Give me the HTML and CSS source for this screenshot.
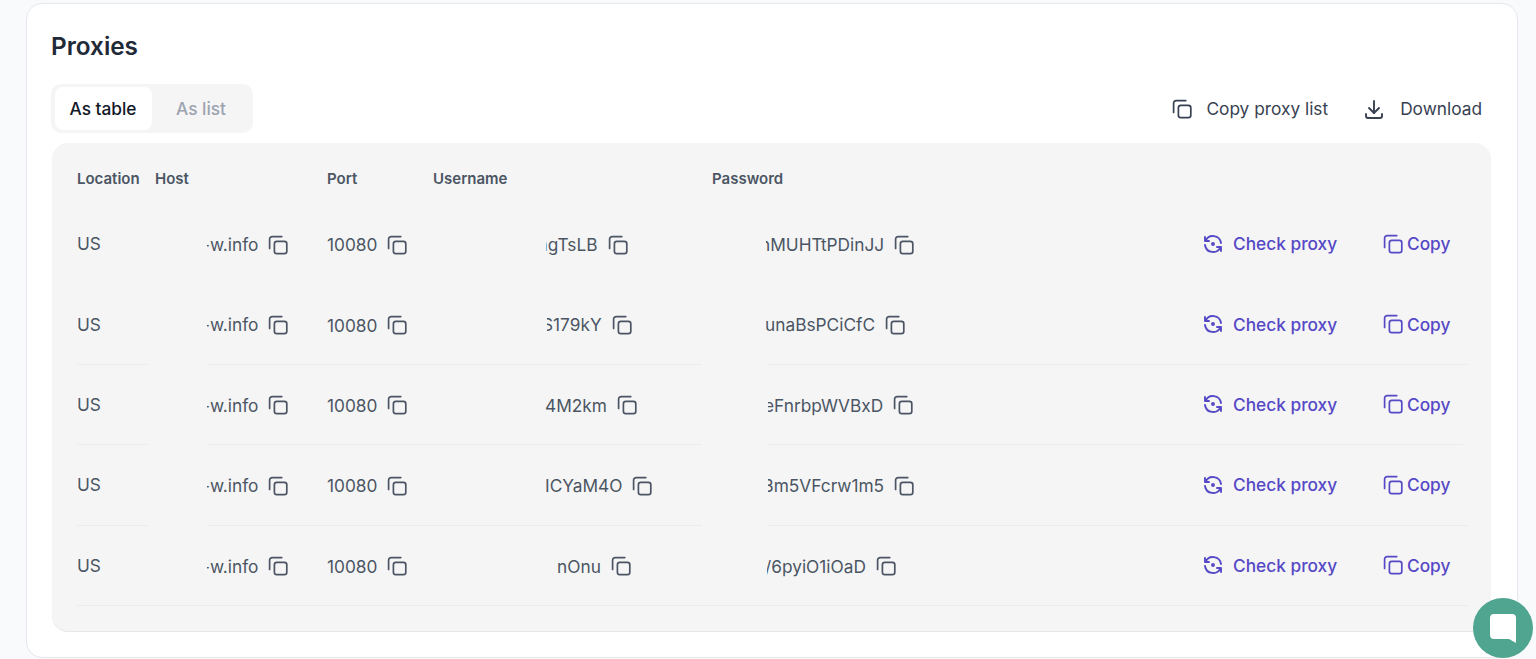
FILE: index.html
```html
<!DOCTYPE html>
<html lang="en">
<head>
  <meta charset="UTF-8" />
  <meta name="viewport" content="width=device-width, initial-scale=1.0" />
  <title>Proxies</title>
  <link rel="stylesheet" href="styles.css">
</head>
<body>
  <svg class="defs" width="0" height="0">
    <symbol id="i-copy" viewBox="0 0 20 20">
      <rect x="6.4" y="6.4" width="12.4" height="12.2" rx="2.4" />
      <path d="M1.6 13.4V4.2a2.6 2.6 0 0 1 2.6-2.6h9.6" />
    </symbol>
    <symbol id="i-check" viewBox="0 0 24 24">
      <path d="M20 11a8.1 8.1 0 0 0-15.5-2m-.5-4v4h4" />
      <path d="M4 13a8.1 8.1 0 0 0 15.5 2m.5 4v-4h-4" />
      <circle cx="12" cy="12" r="1" />
    </symbol>
    <symbol id="i-download" viewBox="0 0 24 24">
      <path d="M4 17v2a2 2 0 0 0 2 2h12a2 2 0 0 0 2-2v-2" />
      <path d="M7 11l5 5l5-5" />
      <path d="M12 4v12" />
    </symbol>
  </svg>

  <main class="card">
    <h1 class="title">Proxies</h1>

    <div class="toolbar">
      <div class="tabs">
        <button class="tab active">As table</button>
        <button class="tab">As list</button>
      </div>
      <div class="actions">
        <a class="action"><svg class="icon"><use href="#i-copy" /></svg>Copy proxy list</a>
        <a class="action action-dl"><svg class="icon icon-dl"><use href="#i-download" /></svg>Download</a>
      </div>
    </div>

    <div class="panel">
      <table class="proxies">
        <colgroup>
          <col class="c-loc"><col class="c-host"><col class="c-port"><col class="c-user"><col class="c-pass"><col class="c-check"><col class="c-copy">
        </colgroup>
        <thead>
          <tr><th>Location</th><th>Host</th><th>Port</th><th>Username</th><th>Password</th><th></th><th></th></tr>
        </thead>
        <tbody>
          <tr class="plain">
            <td>US</td>
            <td class="host"><span class="val masked cut-host">-w.info</span><svg class="icon"><use href="#i-copy" /></svg></td>
            <td><span class="val">10080</span><svg class="icon"><use href="#i-copy" /></svg></td>
            <td class="user"><span class="val masked cut-u1">agTsLB</span><svg class="icon"><use href="#i-copy" /></svg></td>
            <td class="pass"><span class="val masked cut-p1">nMUHTtPDinJJ</span><svg class="icon"><use href="#i-copy" /></svg></td>
            <td class="link"><a><svg class="icon icon-check"><use href="#i-check" /></svg>Check proxy</a></td>
            <td class="link"><a class="copy"><svg class="icon"><use href="#i-copy" /></svg>Copy</a></td>
          </tr>
          <tr class="broken">
            <td>US</td>
            <td class="host"><span class="val masked cut-host">-w.info</span><svg class="icon"><use href="#i-copy" /></svg></td>
            <td><span class="val">10080</span><svg class="icon"><use href="#i-copy" /></svg></td>
            <td class="user"><span class="val masked cut-u2">S179kY</span><svg class="icon"><use href="#i-copy" /></svg></td>
            <td class="pass"><span class="val masked cut-p2">unaBsPCiCfC</span><svg class="icon"><use href="#i-copy" /></svg></td>
            <td class="link"><a><svg class="icon icon-check"><use href="#i-check" /></svg>Check proxy</a></td>
            <td class="link"><a class="copy"><svg class="icon"><use href="#i-copy" /></svg>Copy</a></td>
          </tr>
          <tr class="broken short-line">
            <td>US</td>
            <td class="host"><span class="val masked cut-host">-w.info</span><svg class="icon"><use href="#i-copy" /></svg></td>
            <td><span class="val">10080</span><svg class="icon"><use href="#i-copy" /></svg></td>
            <td class="user"><span class="val">4M2km</span><svg class="icon"><use href="#i-copy" /></svg></td>
            <td class="pass"><span class="val masked cut-p3">eFnrbpWVBxD</span><svg class="icon"><use href="#i-copy" /></svg></td>
            <td class="link"><a><svg class="icon icon-check"><use href="#i-check" /></svg>Check proxy</a></td>
            <td class="link"><a class="copy"><svg class="icon"><use href="#i-copy" /></svg>Copy</a></td>
          </tr>
          <tr class="broken">
            <td>US</td>
            <td class="host"><span class="val masked cut-host">-w.info</span><svg class="icon"><use href="#i-copy" /></svg></td>
            <td><span class="val">10080</span><svg class="icon"><use href="#i-copy" /></svg></td>
            <td class="user"><span class="val">ICYaM4O</span><svg class="icon"><use href="#i-copy" /></svg></td>
            <td class="pass"><span class="val masked cut-p4">3m5VFcrw1m5</span><svg class="icon"><use href="#i-copy" /></svg></td>
            <td class="link"><a><svg class="icon icon-check"><use href="#i-check" /></svg>Check proxy</a></td>
            <td class="link"><a class="copy"><svg class="icon"><use href="#i-copy" /></svg>Copy</a></td>
          </tr>
          <tr>
            <td>US</td>
            <td class="host"><span class="val masked cut-host">-w.info</span><svg class="icon"><use href="#i-copy" /></svg></td>
            <td><span class="val">10080</span><svg class="icon"><use href="#i-copy" /></svg></td>
            <td class="user short"><span class="val">nOnu</span><svg class="icon"><use href="#i-copy" /></svg></td>
            <td class="pass"><span class="val masked cut-p5">/6pyiO1iOaD</span><svg class="icon"><use href="#i-copy" /></svg></td>
            <td class="link"><a><svg class="icon icon-check"><use href="#i-check" /></svg>Check proxy</a></td>
            <td class="link"><a class="copy"><svg class="icon"><use href="#i-copy" /></svg>Copy</a></td>
          </tr>
        </tbody>
      </table>
    </div>
  </main>

  <button class="chat" aria-label="Chat">
    <svg width="28" height="31" viewBox="0 0 28 31"><path d="M5 1h18a4 4 0 0 1 4 4v25l-7-4H5a4 4 0 0 1-4-4V5a4 4 0 0 1 4-4z" /></svg>
  </button>
</body>
</html>
```

FILE: styles.css
```css
html, body {
  height: 100%;
}

body {
  margin: 0;
  padding: 3px 18px 0 26px;
  box-sizing: border-box;
  background: #f9fafb;
  color: #4b5563;
  font-family: Inter, 'Liberation Sans', sans-serif;
  font-size: 17.3px;
  overflow: hidden;
}

.defs {
  position: absolute;
}

.card {
  height: 655px;
  box-sizing: border-box;
  padding: 24px 26px 0 24px;
  background: #fff;
  border: 1px solid #e5e7eb;
  border-radius: 16px;
}

.title {
  margin: 0 0 20px;
  font-size: 24.3px;
  line-height: 36px;
  font-weight: 600;
  color: #1f2937;
}

.toolbar {
  display: flex;
  justify-content: space-between;
  align-items: center;
  margin-bottom: 10px;
}

.tabs {
  display: flex;
  width: 202px;
  height: 49px;
  box-sizing: border-box;
  padding: 3px 4px;
  background: #f5f5f6;
  border-radius: 10px;
}

.tab {
  padding: 0 14px;
  border: none;
  border-radius: 8px;
  background: transparent;
  color: #9ca3af;
  font: 500 17.3px Inter, sans-serif;
}

.tab.active {
  width: 97px;
  padding: 0 15px 0 14px;
  background: #fff;
  color: #111827;
}

.tab + .tab {
  padding-left: 24px;
}

.actions {
  display: flex;
  gap: 34px;
  padding-right: 9px;
}

.action {
  display: flex;
  align-items: center;
  gap: 14px;
  color: #374151;
}

.icon {
  width: 20px;
  height: 20px;
  flex: none;
  fill: none;
  stroke: currentColor;
  stroke-width: 1.7;
  stroke-linecap: round;
  stroke-linejoin: round;
}

.icon-dl,
.icon-check {
  width: 24px;
  height: 24px;
  stroke-width: 1.9;
}

.panel {
  height: 488px;
  box-sizing: border-box;
  margin-left: 1px;
  padding: 0 23px 0 25px;
  background: #f5f5f6;
  border-radius: 16px;
  box-shadow: 0 1px 0 #e5e7eb;
}

.proxies {
  width: 100%;
  table-layout: fixed;
  border-collapse: collapse;
}

.c-loc { width: 78px; }
.c-host { width: 172px; }
.c-port { width: 106px; }
.c-user { width: 279px; }
.c-pass { width: 489px; }
.c-check { width: 182px; }

th {
  height: 51px;
  padding: 10px 0 0;
  text-align: left;
  font-size: 15px;
  font-weight: 600;
  color: #4b5563;
}

td {
  position: relative;
  height: 79.4px;
  padding: 0;
  border-bottom: 1px solid #ebeced;
  white-space: nowrap;
}

tr.plain td {
  border-bottom-color: transparent;
}

td .icon {
  vertical-align: middle;
  margin-left: 10px;
}

.val {
  vertical-align: middle;
}

.host {
  padding-left: 52px;
}

.user {
  padding-left: 112px;
}

.user.short {
  padding-left: 124px;
}

.pass {
  padding-left: 53px;
}

/* the start of these values is blanked out in the source */
.masked {
  position: relative;
  display: inline-block;
  margin-left: calc(var(--cut) * -1);
}

.masked::before {
  content: '';
  position: absolute;
  top: 0;
  bottom: 0;
  left: 0;
  width: var(--mask);
  background: #f5f5f6;
}

.cut-host { --cut: 5px; --mask: 5px; }
.cut-u1 { --cut: 7px; --mask: 8px; }
.cut-u2 { --cut: 3px; --mask: 5px; }
.cut-p1 { --cut: 5px; --mask: 6px; }
.cut-p2 { --cut: 0px; --mask: 1px; }
.cut-p3 { --cut: 1px; --mask: 4px; }
.cut-p4 { --cut: 2px; --mask: 5px; }
.cut-p5 { --cut: 0px; --mask: 2px; }

/* blanked stretches of the row lines */
tr.broken .host::before,
tr.broken .pass::before,
tr.short-line td:last-child::after {
  content: '';
  position: absolute;
  bottom: -1px;
  height: 1px;
  background: #f5f5f6;
}

tr.broken .host::before {
  left: -7px;
  width: 59px;
}

tr.broken .pass::before {
  left: -10px;
  width: 65px;
}

tr.short-line td:last-child::after {
  right: 0;
  width: 5px;
}

.link {
  color: #5549c6;
  font-weight: 500;
}

.link a {
  display: flex;
  align-items: center;
  gap: 8px;
}

.link .icon {
  margin-left: 0;
}

.link .copy {
  gap: 4px;
}

.chat {
  position: fixed;
  left: 1473px;
  top: 598px;
  display: flex;
  align-items: center;
  justify-content: center;
  width: 60px;
  height: 60px;
  padding: 0;
  border: none;
  border-radius: 50%;
  background: #4fa58f;
}

.chat path {
  fill: #fff;
}
```
